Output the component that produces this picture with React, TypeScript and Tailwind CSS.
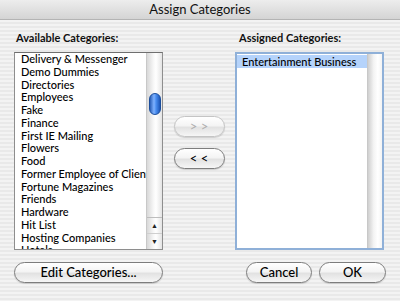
import { FC } from "react";

const available = [
  "Delivery & Messenger",
  "Demo Dummies",
  "Directories",
  "Employees",
  "Fake",
  "Finance",
  "First IE Mailing",
  "Flowers",
  "Food",
  "Former Employee of Client",
  "Fortune Magazines",
  "Friends",
  "Hardware",
  "Hit List",
  "Hosting Companies",
  "Hotels",
];

const font = "font-['Lucida_Grande','Lato','Open_Sans',sans-serif]";

const AquaButton: FC<{ label: string; className?: string; disabled?: boolean }> = ({
  label,
  className,
  disabled,
}) => (
  <div
    className={`flex items-center justify-center h-[21px] rounded-full border ${
      disabled ? "border-[#c4c4c4] text-[#b0b0b0]" : "border-[#7d7d7d] text-[#000]"
    } bg-[linear-gradient(to_bottom,#ffffff_0%,#f4f4f4_45%,#e2e2e2_55%,#f6f6f6_100%)] shadow-[0_1px_1px_rgba(0,0,0,0.15)] text-[13px] font-medium ${className ?? ""}`}
  >
    {label}
  </div>
);

export default function App() {
  return (
    <div
      className={`w-[400px] h-[301px] overflow-hidden flex flex-col ${font} bg-[repeating-linear-gradient(to_bottom,#f3f3f3_0px,#f3f3f3_2px,#e9e9e9_2px,#e9e9e9_4px)]`}
    >
      <div className="h-[20px] shrink-0 flex items-center justify-center bg-[linear-gradient(to_bottom,#ededed,#d4d4d4)] border-b border-[#b4b4b4] text-[13px] text-[#111]">
        Assign Categories
      </div>
      <div className="flex px-[14px] pt-[12px]">
        <div className="w-[149px] flex flex-col">
          <div className="pl-[2px] h-[20px] text-[11px] font-bold text-[#111] leading-[12px]">
            Available Categories:
          </div>
          <div className="h-[198px] flex border border-[#8e8e8e] border-t-[#6f6f6f] bg-white overflow-hidden">
            <div className="flex-1 overflow-hidden pl-[6px]">
              {available.map((c) => (
                <div
                  key={c}
                  className="h-[12.75px] leading-[12.75px] text-[11px] font-medium text-[#000] whitespace-nowrap"
                >
                  {c}
                </div>
              ))}
            </div>
            <div className="w-[16px] shrink-0 flex flex-col border-l border-[#c8c8c8] bg-[linear-gradient(to_right,#d8d8d8,#f8f8f8_45%,#ffffff_60%,#e4e4e4)]">
              <div className="h-[40px]" />
              <div className="mx-auto w-[12px] h-[22px] rounded-full border border-[#1c4e9c] bg-[linear-gradient(to_right,#2a5fb8,#7fb2ff_40%,#4a8ef0_60%,#1d56b8)]" />
              <div className="flex-1" />
              <div className="h-[32px] flex flex-col border-t border-[#bdbdbd] text-[7px] text-[#222] leading-none">
                <div className="flex-1 flex items-center justify-center border-b border-[#cfcfcf]">▲</div>
                <div className="flex-1 flex items-center justify-center">▼</div>
              </div>
            </div>
          </div>
        </div>
        <div className="w-[72px] flex flex-col items-center pt-[84px] gap-[11px]">
          <AquaButton label="> >" disabled className="w-[51px]" />
          <AquaButton label="< <" className="w-[51px]" />
        </div>
        <div className="w-[149px] flex flex-col">
          <div className="pl-[4px] h-[20px] text-[11px] font-bold text-[#111] leading-[12px]">
            Assigned Categories:
          </div>
          <div className="h-[198px] flex border-2 border-[#8fb0d8] bg-white overflow-hidden">
            <div className="flex-1 pt-[1px]">
              <div className="h-[13px] leading-[13px] pl-[5px] bg-[#b5d3fb] text-[11px] font-medium text-[#000]">
                Entertainment Business
              </div>
            </div>
            <div className="w-[15px] shrink-0 border-l border-[#c8c8c8] bg-[linear-gradient(to_right,#cfcfcf,#f3f3f3_40%,#ffffff_70%,#f4f4f4)]" />
          </div>
        </div>
      </div>
      <div className="flex px-[14px] pt-[12px]">
        <AquaButton label="Edit Categories..." className="w-[149px]" />
        <div className="flex-1" />
        <AquaButton label="Cancel" className="w-[66px]" />
        <AquaButton label="OK" className="w-[67px] ml-[7px]" />
      </div>
    </div>
  );
}
